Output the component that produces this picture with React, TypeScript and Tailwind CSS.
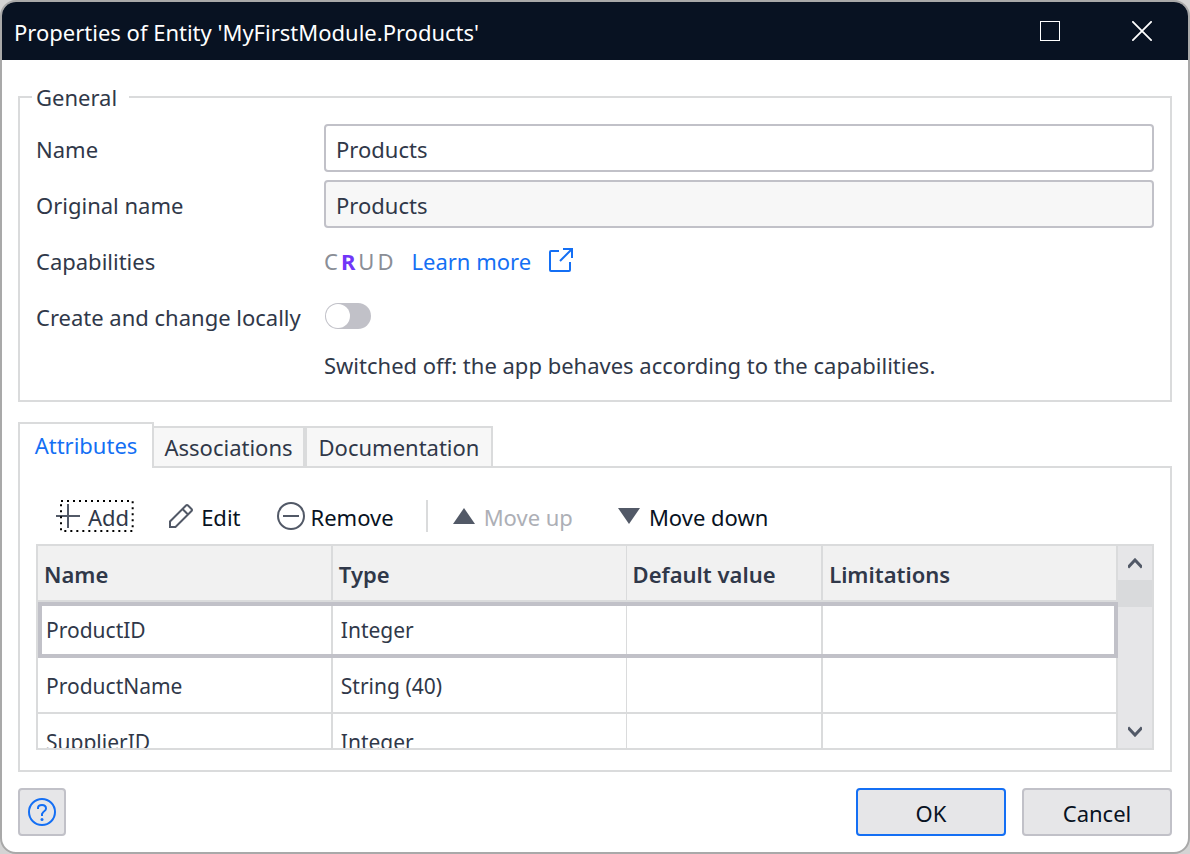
import { useState } from "react";
import type { ReactNode } from "react";

const attributes = [
  { name: "ProductID", type: "Integer" },
  { name: "ProductName", type: "String (40)" },
  { name: "SupplierID", type: "Integer" },
];

const columns = [
  { label: "Name", style: "w-[27.3%] border-r-2" },
  { label: "Type", style: "w-[27.2%] border-r" },
  { label: "Default value", style: "w-[18.2%] border-r-2" },
  { label: "Limitations", style: "w-[27.3%] border-r-2" },
];

function Row({ label, htmlFor, children }: { label: string; htmlFor?: string; children: ReactNode }) {
  return (
    <div className="flex h-12 items-center">
      <label htmlFor={htmlFor} className="w-72 shrink-0 whitespace-nowrap pt-[2px]">
        {label}
      </label>
      {children}
    </div>
  );
}

function Titlebar() {
  return (
    <header className="flex h-[58px] items-center bg-[#081222] pl-3 text-white">
      <h1 className="flex-1 pt-[2px]">Properties of Entity 'MyFirstModule.Products'</h1>
      <button aria-label="Maximize" className="flex h-full w-[92px] items-center justify-center">
        <svg width="20" height="20" viewBox="0 0 20 20" fill="none" stroke="currentColor">
          <rect x="0.5" y="0.5" width="19" height="19" />
        </svg>
      </button>
      <button aria-label="Close" className="flex h-full w-[92px] items-center justify-center">
        <svg width="20" height="20" viewBox="0 0 20 20" fill="none" stroke="currentColor" strokeWidth="1.8">
          <path d="M0.3 0.3 19.7 19.7M19.7 0.3 0.3 19.7" />
        </svg>
      </button>
    </header>
  );
}

function General() {
  const [name, setName] = useState("Products");
  const [local, setLocal] = useState(false);
  return (
    <fieldset className="border-2 border-[#dadbdc] px-3 pb-4">
      <legend className="h-[34px] pl-1 pr-3 leading-[34px]">General</legend>
      <div className="flex flex-col gap-2 px-1 pt-[10px]">
        <Row label="Name" htmlFor="name">
          <input
            id="name"
            value={name}
            onChange={(e) => setName(e.target.value)}
            className="h-12 min-w-0 flex-1 rounded border-2 border-[#c1c1c8] bg-white px-[10px] pt-[2px] outline-none"
          />
        </Row>
        <Row label="Original name" htmlFor="original">
          <input
            id="original"
            value="Products"
            readOnly
            className="h-12 min-w-0 flex-1 rounded border-2 border-[#c1c1c8] bg-[#f7f7f7] px-[10px] pt-[2px] outline-none"
          />
        </Row>
        <Row label="Capabilities">
          <span className="flex gap-[3px] pt-[2px] text-[#8a8e96]">
            <span>C</span>
            <span className="font-bold text-[#7036f8]">R</span>
            <span>U</span>
            <span>D</span>
          </span>
          <a href="#learn" className="ml-[18px] flex items-center gap-[18px] text-[#146ff4]">
            <span className="pt-[2px]">Learn more</span>
            <svg width="24" height="24" viewBox="0 0 24 24" fill="none" stroke="currentColor" strokeWidth="2">
              <path d="M10 3H2Q1 3 1 4V22Q1 23 2 23H20Q21 23 21 22V14" />
              <path d="M14 1H23V10M23 1 11 13" />
            </svg>
          </a>
        </Row>
        <Row label="Create and change locally" htmlFor="local">
          <input
            id="local"
            type="checkbox"
            role="switch"
            checked={local}
            onChange={(e) => setLocal(e.target.checked)}
            className="ml-px h-[26px] w-[46px] appearance-none rounded-full bg-[#c1c1c8] p-px before:block before:size-6 before:rounded-full before:bg-white checked:bg-[#146ff4] checked:before:ml-5"
          />
        </Row>
        <p className="ml-72 h-9 leading-[34px]">Switched off: the app behaves according to the capabilities.</p>
      </div>
    </fieldset>
  );
}

function Toolbar() {
  return (
    <div className="flex h-8 items-center whitespace-nowrap pl-5 text-[#081222]">
      <button className="relative flex h-8 items-center gap-2 pr-1 text-[#303849] outline-none">
        <svg width="24" height="24" viewBox="0 0 24 24" fill="none" stroke="#525967" strokeWidth="2">
          <path d="M12 0V24M0 12H24" />
        </svg>
        <span className="pt-[2px]">Add</span>
        <svg className="absolute left-1 top-0 h-8 w-[calc(100%-4px)] overflow-visible" fill="none" aria-hidden="true">
          <rect x="1" y="1" width="98%" height="30" stroke="#000" strokeWidth="2" strokeDasharray="2 4" />
        </svg>
      </button>
      <button className="ml-9 flex items-center gap-2">
        <svg width="24" height="24" viewBox="0 0 24 24" fill="none" stroke="#525967" strokeWidth="2">
          <path d="M1 23V17.5L17 1.5Q18 0.5 19 1.5L22.5 5Q23.5 6 22.5 7L6.500 23ZM13.500 5 19 10.500" />
        </svg>
        <span className="pt-[2px]">Edit</span>
      </button>
      <button className="ml-9 flex items-center gap-[6px]">
        <svg width="28" height="28" viewBox="0 0 28 28" fill="none" stroke="#525967" strokeWidth="2">
          <circle cx="14" cy="14" r="13" />
          <path d="M6 14H22" />
        </svg>
        <span className="pt-[2px]">Remove</span>
      </button>
      <span className="ml-8 h-8 w-[2px] bg-[#dadbdc]" />
      <button disabled className="ml-6 flex items-center gap-2 text-[#adafb6]">
        <svg width="24" height="16" viewBox="0 0 24 16" fill="#525967">
          <path d="M1 16 12 0 23 16Z" />
        </svg>
        <span className="pt-[2px]">Move up</span>
      </button>
      <button className="ml-11 flex items-center gap-2">
        <svg width="24" height="16" viewBox="0 0 24 16" fill="#525967">
          <path d="M1 0 12 16 23 0Z" />
        </svg>
        <span className="pt-[2px]">Move down</span>
      </button>
    </div>
  );
}

function AttributeTable() {
  return (
    <div className="mt-3 flex h-[206px] border-2 border-[#dadbdc]">
      <div className="min-w-0 flex-1 overflow-hidden">
        <table className="w-full table-fixed border-separate border-spacing-0 text-left">
          <thead>
            <tr className="h-14 bg-[#f1f1f1]">
              {columns.map((c) => (
                <th key={c.label} className={`${c.style} border-b-2 border-[#dadbdc] px-[6px] pt-[2px] font-semibold`}>
                  {c.label}
                </th>
              ))}
            </tr>
          </thead>
          <tbody className="text-[21px]">
            {attributes.map((a, i) => (
              <tr
                key={a.name}
                className={i === 0 ? "h-14 outline-4 -outline-offset-4 outline-[#c1c1c8]" : "h-14"}
              >
                {columns.map((c, j) => (
                  <td key={c.label} className={`${c.style} border-b-2 border-[#dadbdc] px-2 pt-[2px]`}>
                    {j === 0 ? a.name : j === 1 ? a.type : ""}
                  </td>
                ))}
              </tr>
            ))}
          </tbody>
        </table>
      </div>
      <div className="flex w-[34px] shrink-0 flex-col bg-[#e6e6e8]">
        <button aria-label="Scroll up" className="flex h-[34px] items-center justify-center">
          <svg width="14" height="11" viewBox="0 0 14 11" fill="none" stroke="#525967" strokeWidth="3">
            <path d="M0 9.500 7 2 14 9.500" />
          </svg>
        </button>
        <div className="flex-1">
          <div className="h-[27px] bg-[#d9dadc]" />
        </div>
        <button aria-label="Scroll down" className="flex h-[34px] items-center justify-center">
          <svg width="14" height="11" viewBox="0 0 14 11" fill="none" stroke="#525967" strokeWidth="3">
            <path d="M0 1.500 7 9 14 1.500" />
          </svg>
        </button>
      </div>
    </div>
  );
}

function Tabs() {
  return (
    <section className="mt-5">
      <div role="tablist" className="flex items-end">
        <button
          role="tab"
          aria-selected="true"
          className="z-10 h-[46px] w-[136px] border-2 border-b-0 border-[#dadbdc] bg-white pb-[2px] text-[#146ff4]"
        >
          Attributes
        </button>
        <button role="tab" aria-selected="false" className="h-[42px] w-[151px] border-2 border-l-0 border-[#dadbdc] bg-[#f7f7f7]">
          Associations
        </button>
        <button role="tab" aria-selected="false" className="h-[42px] w-[188px] border-2 border-[#dadbdc] bg-[#f7f7f7]">
          Documentation
        </button>
        <span className="h-[2px] flex-1 bg-[#dadbdc]" />
      </div>
      <div role="tabpanel" className="border-2 border-t-0 border-[#dadbdc] px-4 pb-5 pt-8">
        <Toolbar />
        <AttributeTable />
      </div>
    </section>
  );
}

export default function App() {
  return (
    <div className="min-h-screen bg-[#d4d4d4] font-['Noto_Sans',sans-serif] text-[22px] leading-[30px] text-[#303849]">
      <main className="flex min-h-screen flex-col overflow-hidden rounded-2xl border-2 border-[#a9a9a9] bg-white">
        <Titlebar />
        <div className="px-4 py-4 pt-5">
          <General />
          <Tabs />
          <footer className="mt-4 flex gap-4 text-[#081222]">
            <button
              aria-label="Help"
              className="flex size-12 items-center justify-center rounded border-2 border-[#c1c1c8] bg-[#e6e6e8]"
            >
              <svg width="28" height="28" viewBox="0 0 28 28" fill="none" stroke="#146ff4" strokeWidth="2">
                <circle cx="14" cy="14" r="13" />
                <path d="M10 11V10Q10 7 14 7T18 10.500Q18 12 16.500 13T14 16V18" />
                <circle cx="14" cy="21.500" r="1.500" fill="#146ff4" stroke="none" />
              </svg>
            </button>
            <button className="ml-auto h-12 w-[150px] rounded border-2 border-[#146ff4] bg-[#e6e6e8] pt-[2px]">OK</button>
            <button className="h-12 w-[150px] rounded border-2 border-[#c1c1c8] bg-[#e6e6e8] pt-[2px]">Cancel</button>
          </footer>
        </div>
      </main>
    </div>
  );
}
